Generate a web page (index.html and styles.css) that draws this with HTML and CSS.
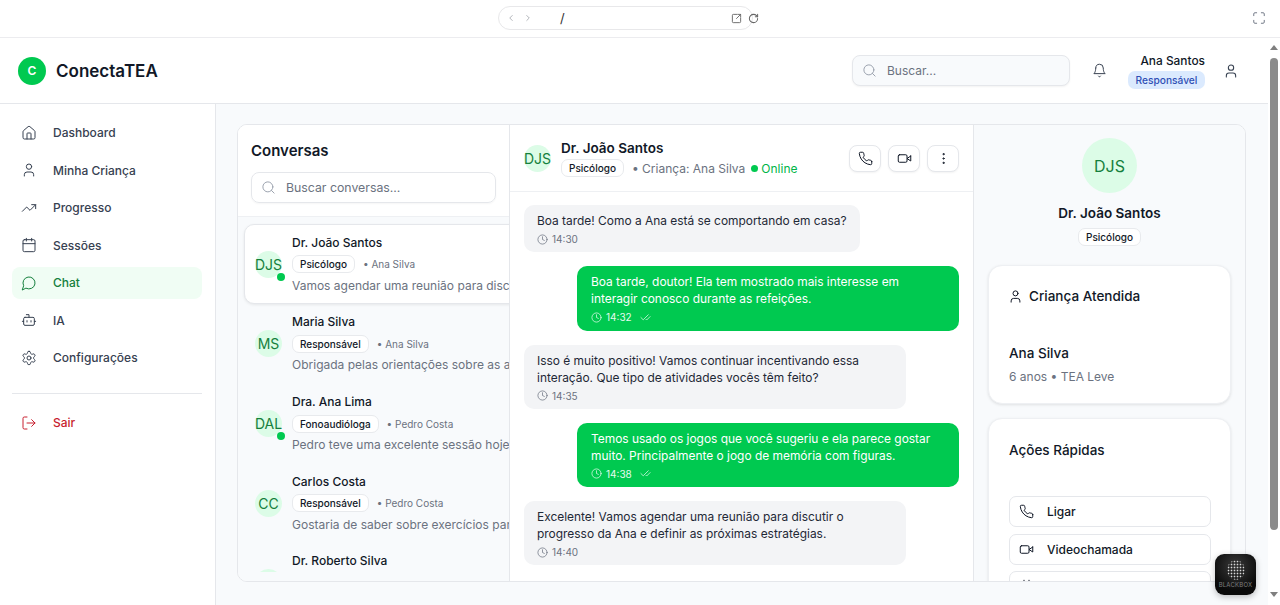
FILE: index.html
```html
<!DOCTYPE html>
<html lang="pt-BR">
<head>
  <meta charset="UTF-8" />
  <title>ConectaTEA</title>
  <link rel="stylesheet" href="styles.css">
</head>
<body>
  <svg class="defs" width="0" height="0">
    <symbol id="i-home" viewBox="0 0 24 24"><path d="M15 21v-8a1 1 0 0 0-1-1h-4a1 1 0 0 0-1 1v8"/><path d="M3 10a2 2 0 0 1 .709-1.528l7-5.999a2 2 0 0 1 2.582 0l7 5.999A2 2 0 0 1 21 10v9a2 2 0 0 1-2 2H5a2 2 0 0 1-2-2z"/></symbol>
    <symbol id="i-user" viewBox="0 0 24 24"><path d="M19 21v-2a4 4 0 0 0-4-4H9a4 4 0 0 0-4 4v2"/><circle cx="12" cy="7" r="4"/></symbol>
    <symbol id="i-trend" viewBox="0 0 24 24"><polyline points="22 7 13.5 15.5 8.5 10.5 2 17"/><polyline points="16 7 22 7 22 13"/></symbol>
    <symbol id="i-calendar" viewBox="0 0 24 24"><path d="M8 2v4"/><path d="M16 2v4"/><rect width="18" height="18" x="3" y="4" rx="2"/><path d="M3 10h18"/></symbol>
    <symbol id="i-message" viewBox="0 0 24 24"><path d="M7.9 20A9 9 0 1 0 4 16.1L2 22Z"/></symbol>
    <symbol id="i-bot" viewBox="0 0 24 24"><path d="M12 8V4H8"/><rect width="16" height="12" x="4" y="8" rx="2"/><path d="M2 14h2"/><path d="M20 14h2"/><path d="M15 13v2"/><path d="M9 13v2"/></symbol>
    <symbol id="i-settings" viewBox="0 0 24 24"><path d="M12.22 2h-.44a2 2 0 0 0-2 2v.18a2 2 0 0 1-1 1.73l-.43.25a2 2 0 0 1-2 0l-.15-.08a2 2 0 0 0-2.73.73l-.22.38a2 2 0 0 0 .73 2.73l.15.1a2 2 0 0 1 1 1.72v.51a2 2 0 0 1-1 1.74l-.15.09a2 2 0 0 0-.73 2.73l.22.38a2 2 0 0 0 2.73.73l.15-.08a2 2 0 0 1 2 0l.43.25a2 2 0 0 1 1 1.73V20a2 2 0 0 0 2 2h.44a2 2 0 0 0 2-2v-.18a2 2 0 0 1 1-1.73l.43-.25a2 2 0 0 1 2 0l.15.08a2 2 0 0 0 2.73-.73l.22-.39a2 2 0 0 0-.73-2.73l-.15-.08a2 2 0 0 1-1-1.74v-.5a2 2 0 0 1 1-1.74l.15-.09a2 2 0 0 0 .73-2.73l-.22-.38a2 2 0 0 0-2.73-.73l-.15.08a2 2 0 0 1-2 0l-.43-.25a2 2 0 0 1-1-1.73V4a2 2 0 0 0-2-2z"/><circle cx="12" cy="12" r="3"/></symbol>
    <symbol id="i-logout" viewBox="0 0 24 24"><path d="M9 21H5a2 2 0 0 1-2-2V5a2 2 0 0 1 2-2h4"/><polyline points="16 17 21 12 16 7"/><line x1="21" x2="9" y1="12" y2="12"/></symbol>
    <symbol id="i-search" viewBox="0 0 24 24"><circle cx="11" cy="11" r="8"/><path d="m21 21-4.3-4.3"/></symbol>
    <symbol id="i-bell" viewBox="0 0 24 24"><path d="M6 8a6 6 0 0 1 12 0c0 7 3 9 3 9H3s3-2 3-9"/><path d="M10.3 21a1.94 1.94 0 0 0 3.4 0"/></symbol>
    <symbol id="i-phone" viewBox="0 0 24 24"><path d="M22 16.92v3a2 2 0 0 1-2.18 2 19.79 19.79 0 0 1-8.63-3.07 19.5 19.5 0 0 1-6-6 19.79 19.79 0 0 1-3.07-8.67A2 2 0 0 1 4.11 2h3a2 2 0 0 1 2 1.72 12.84 12.84 0 0 0 .7 2.81 2 2 0 0 1-.45 2.11L8.09 9.91a16 16 0 0 0 6 6l1.27-1.27a2 2 0 0 1 2.11-.45 12.84 12.84 0 0 0 2.81.7A2 2 0 0 1 22 16.92z"/></symbol>
    <symbol id="i-video" viewBox="0 0 24 24"><path d="m22 8-6 4 6 4V8Z"/><rect width="14" height="12" x="2" y="6" rx="2" ry="2"/></symbol>
    <symbol id="i-more" viewBox="0 0 24 24"><circle cx="12" cy="12" r="1"/><circle cx="12" cy="5" r="1"/><circle cx="12" cy="19" r="1"/></symbol>
    <symbol id="i-clock" viewBox="0 0 24 24"><circle cx="12" cy="12" r="10"/><polyline points="12 6 12 12 16 14"/></symbol>
    <symbol id="i-checks" viewBox="0 0 24 24"><path d="M18 6 7 17l-5-5"/><path d="m22 10-7.5 7.5L13 16"/></symbol>
    <symbol id="i-full" viewBox="0 0 24 24"><path d="M8 3H5a2 2 0 0 0-2 2v3"/><path d="M21 8V5a2 2 0 0 0-2-2h-3"/><path d="M3 16v3a2 2 0 0 0 2 2h3"/><path d="M16 21h3a2 2 0 0 0 2-2v-3"/></symbol>
    <symbol id="i-open" viewBox="0 0 24 24"><path d="M13 3H5a2 2 0 0 0-2 2v14a2 2 0 0 0 2 2h14a2 2 0 0 0 2-2v-8"/><path d="M21 3l-9 9"/><path d="M15 3h6v6"/></symbol>
    <symbol id="i-reload" viewBox="0 0 24 24"><path d="M21 12a9 9 0 1 1-9-9c2.52 0 4.93 1 6.74 2.74L21 8"/><path d="M21 3v5h-5"/></symbol>
    <symbol id="i-left" viewBox="0 0 24 24"><path d="m15 18-6-6 6-6"/></symbol>
    <symbol id="i-right" viewBox="0 0 24 24"><path d="m9 18 6-6-6-6"/></symbol>
  </svg>

  <div class="toolbar">
    <div class="address">
      <svg class="icon tool-arrow"><use href="#i-left"/></svg>
      <svg class="icon tool-arrow"><use href="#i-right"/></svg>
      <span class="address-path">/</span>
      <svg class="icon tool-open"><use href="#i-open"/></svg>
      <svg class="icon tool-reload"><use href="#i-reload"/></svg>
    </div>
    <svg class="icon tool-full"><use href="#i-full"/></svg>
  </div>

  <div class="window">
    <div class="page">
      <header class="header">
        <div class="brand">
          <div class="brand-mark">C</div>
          <div class="brand-name">ConectaTEA</div>
        </div>
        <div class="header-right">
          <div class="header-search">
            <svg class="icon search-icon"><use href="#i-search"/></svg>
            <span>Buscar...</span>
          </div>
          <svg class="icon bell"><use href="#i-bell"/></svg>
          <div class="me">
            <div class="me-name">Ana Santos</div>
            <div class="me-role">Responsável</div>
          </div>
          <svg class="icon me-icon"><use href="#i-user"/></svg>
        </div>
      </header>

      <div class="body">
        <nav class="sidebar">
          <a class="nav-item"><svg class="icon"><use href="#i-home"/></svg>Dashboard</a>
          <a class="nav-item"><svg class="icon"><use href="#i-user"/></svg>Minha Criança</a>
          <a class="nav-item"><svg class="icon"><use href="#i-trend"/></svg>Progresso</a>
          <a class="nav-item"><svg class="icon"><use href="#i-calendar"/></svg>Sessões</a>
          <a class="nav-item active"><svg class="icon"><use href="#i-message"/></svg>Chat</a>
          <a class="nav-item"><svg class="icon"><use href="#i-bot"/></svg>IA</a>
          <a class="nav-item"><svg class="icon"><use href="#i-settings"/></svg>Configurações</a>
          <div class="nav-divider"></div>
          <a class="nav-item logout"><svg class="icon"><use href="#i-logout"/></svg>Sair</a>
        </nav>

        <main class="main">
          <div class="chat-card">
            <section class="conversations">
              <div class="conv-head">
                <h2>Conversas</h2>
                <div class="conv-search">
                  <svg class="icon search-icon"><use href="#i-search"/></svg>
                  <span>Buscar conversas...</span>
                </div>
              </div>
              <div class="conv-list">
                <div class="conv selected">
                  <div class="avatar">DJS<span class="dot"></span></div>
                  <div class="conv-text">
                    <div class="conv-name">Dr. João Santos</div>
                    <div class="conv-meta"><span class="tag">Psicólogo</span><span>• Ana Silva</span></div>
                    <div class="conv-preview">Vamos agendar uma reunião para discutir</div>
                  </div>
                </div>
                <div class="conv">
                  <div class="avatar">MS</div>
                  <div class="conv-text">
                    <div class="conv-name">Maria Silva</div>
                    <div class="conv-meta"><span class="tag">Responsável</span><span>• Ana Silva</span></div>
                    <div class="conv-preview">Obrigada pelas orientações sobre as atividades</div>
                  </div>
                </div>
                <div class="conv">
                  <div class="avatar">DAL<span class="dot"></span></div>
                  <div class="conv-text">
                    <div class="conv-name">Dra. Ana Lima</div>
                    <div class="conv-meta"><span class="tag">Fonoaudióloga</span><span>• Pedro Costa</span></div>
                    <div class="conv-preview">Pedro teve uma excelente sessão hoje</div>
                  </div>
                </div>
                <div class="conv">
                  <div class="avatar">CC</div>
                  <div class="conv-text">
                    <div class="conv-name">Carlos Costa</div>
                    <div class="conv-meta"><span class="tag">Responsável</span><span>• Pedro Costa</span></div>
                    <div class="conv-preview">Gostaria de saber sobre exercícios para casa</div>
                  </div>
                </div>
                <div class="conv">
                  <div class="avatar">DRS</div>
                  <div class="conv-text">
                    <div class="conv-name">Dr. Roberto Silva</div>
                    <div class="conv-meta"><span class="tag">Neurologista</span><span>• Lucas Lima</span></div>
                    <div class="conv-preview">Os resultados da avaliação estão prontos</div>
                  </div>
                </div>
              </div>
            </section>

            <section class="thread">
              <div class="thread-head">
                <div class="avatar">DJS</div>
                <div class="thread-info">
                  <div class="thread-name">Dr. João Santos</div>
                  <div class="thread-meta">
                    <span class="tag">Psicólogo</span>
                    <span>• Criança: Ana Silva</span>
                    <span class="online"><i></i>Online</span>
                  </div>
                </div>
                <div class="thread-actions">
                  <button class="square-btn"><svg class="icon"><use href="#i-phone"/></svg></button>
                  <button class="square-btn"><svg class="icon"><use href="#i-video"/></svg></button>
                  <button class="square-btn"><svg class="icon"><use href="#i-more"/></svg></button>
                </div>
              </div>
              <div class="messages">
                <div class="msg">
                  <p>Boa tarde! Como a Ana está se comportando em casa?</p>
                  <div class="msg-time"><svg class="icon"><use href="#i-clock"/></svg>14:30</div>
                </div>
                <div class="msg mine">
                  <p>Boa tarde, doutor! Ela tem mostrado mais interesse em interagir conosco durante as refeições.</p>
                  <div class="msg-time"><svg class="icon"><use href="#i-clock"/></svg>14:32<svg class="icon checks"><use href="#i-checks"/></svg></div>
                </div>
                <div class="msg">
                  <p>Isso é muito positivo! Vamos continuar incentivando essa interação. Que tipo de atividades vocês têm feito?</p>
                  <div class="msg-time"><svg class="icon"><use href="#i-clock"/></svg>14:35</div>
                </div>
                <div class="msg mine">
                  <p>Temos usado os jogos que você sugeriu e ela parece gostar muito. Principalmente o jogo de memória com figuras.</p>
                  <div class="msg-time"><svg class="icon"><use href="#i-clock"/></svg>14:38<svg class="icon checks"><use href="#i-checks"/></svg></div>
                </div>
                <div class="msg">
                  <p>Excelente! Vamos agendar uma reunião para discutir o progresso da Ana e definir as próximas estratégias.</p>
                  <div class="msg-time"><svg class="icon"><use href="#i-clock"/></svg>14:40</div>
                </div>
              </div>
            </section>

            <aside class="details">
              <div class="profile">
                <div class="avatar big">DJS</div>
                <div class="profile-name">Dr. João Santos</div>
                <span class="tag">Psicólogo</span>
              </div>
              <div class="panel child-panel">
                <h3><svg class="icon"><use href="#i-user"/></svg>Criança Atendida</h3>
                <div class="child-name">Ana Silva</div>
                <div class="child-info">6 anos • TEA Leve</div>
              </div>
              <div class="panel actions-panel">
                <h3>Ações Rápidas</h3>
                <button class="wide-btn"><svg class="icon"><use href="#i-phone"/></svg>Ligar</button>
                <button class="wide-btn"><svg class="icon"><use href="#i-video"/></svg>Videochamada</button>
                <button class="wide-btn"><svg class="icon"><use href="#i-calendar"/></svg>Agendar Sessão</button>
              </div>
            </aside>
          </div>
        </main>
      </div>
    </div>

    <div class="scrollbar">
      <span class="arrow-up"></span>
      <span class="thumb"></span>
      <span class="arrow-down"></span>
    </div>
  </div>

  <div class="blackbox">
    <div class="blackbox-dots"></div>
    <div class="blackbox-label">BLACKBOX</div>
  </div>
</body>
</html>
```

FILE: styles.css
```css
* {
  box-sizing: border-box;
}

body {
  margin: 0;
  height: 100vh;
  overflow: hidden;
  display: flex;
  flex-direction: column;
  font-family: "Inter", "Liberation Sans", sans-serif;
  color: #111827;
  background: #fff;
}

.defs {
  position: absolute;
}

.icon {
  width: 16px;
  height: 16px;
  fill: none;
  stroke: currentColor;
  stroke-width: 1.6;
  stroke-linecap: round;
  stroke-linejoin: round;
  flex-shrink: 0;
}

/* browser strip */
.toolbar {
  height: 38px;
  flex-shrink: 0;
  display: flex;
  align-items: flex-start;
  padding: 6px 0 0 498px;
  border-bottom: 1px solid #ececef;
  background: #fff;
}

.address {
  width: 255px;
  height: 24px;
  display: flex;
  align-items: center;
  padding-left: 7px;
  border: 1px solid #e8e8ea;
  border-radius: 12px;
  color: #8d9199;
}

.tool-arrow {
  width: 10px;
  height: 10px;
  margin-right: 7px;
}

.address-path {
  margin-left: 20px;
  font-size: 13px;
  color: #333;
}

.tool-open {
  width: 11px;
  height: 11px;
  margin-left: auto;
  color: #666;
  stroke-width: 2;
}

.tool-reload {
  width: 11px;
  height: 11px;
  margin-left: 6px;
  margin-right: -7px;
  color: #666;
  stroke-width: 2.2;
}

.tool-full {
  width: 14px;
  height: 14px;
  margin: 5px 0 0 499px;
  color: #6b7280;
}

.window {
  flex: 1;
  min-height: 0;
  display: flex;
}

.page {
  flex: 1;
  min-width: 0;
  display: flex;
  flex-direction: column;
}

.scrollbar {
  width: 12px;
  flex-shrink: 0;
  display: flex;
  flex-direction: column;
  align-items: center;
  padding-top: 7px;
  background: #fff;
}

.arrow-up {
  border: 4px solid transparent;
  border-top: 0;
  border-bottom: 5px solid #7f7f7f;
}

.thumb {
  width: 8px;
  height: 472px;
  margin-top: 8px;
  border-radius: 4px;
  background: #8b8b8b;
}

.arrow-down {
  margin-top: 62px;
  border: 4px solid transparent;
  border-bottom: 0;
  border-top: 5px solid #7f7f7f;
}

/* header */
.header {
  height: 66px;
  flex-shrink: 0;
  display: flex;
  align-items: center;
  justify-content: space-between;
  padding: 0 29px 0 18px;
  border-bottom: 1px solid #e5e7eb;
  background: #fff;
}

.brand {
  display: flex;
  align-items: center;
  gap: 10px;
}

.brand-mark {
  width: 28px;
  height: 28px;
  display: flex;
  align-items: center;
  justify-content: center;
  border-radius: 50%;
  background: #00c950;
  color: #fff;
  font-size: 12px;
  font-weight: 600;
}

.brand-name {
  font-size: 17px;
  font-weight: 600;
}

.header-right {
  display: flex;
  align-items: center;
}

.header-search {
  width: 218px;
  height: 31px;
  display: flex;
  align-items: center;
  gap: 10px;
  padding-left: 9px;
  border: 1px solid #e5e7eb;
  border-radius: 8px;
  background: #f8fafc;
  box-shadow: 0 1px 2px rgba(0, 0, 0, 0.05);
  color: #6b7280;
  font-size: 12px;
}

.search-icon {
  width: 15px;
  height: 15px;
  color: #9ca3af;
}

.bell {
  width: 15px;
  height: 15px;
  margin-left: 21.5px;
  color: #374151;
}

.me {
  width: 77px;
  margin-left: 21.5px;
  display: flex;
  flex-direction: column;
  align-items: flex-end;
}

.me-name {
  font-size: 11.9px;
  font-weight: 500;
  line-height: 15px;
}

.me-role {
  width: 77px;
  margin-top: 3px;
  height: 18px;
  line-height: 18px;
  text-align: center;
  border-radius: 7px;
  background: #dbeafe;
  color: #2f4fb5;
  font-size: 10.2px;
  font-weight: 500;
}

.me-icon {
  margin-left: 18px;
  color: #374151;
}

.body {
  flex: 1;
  min-height: 0;
  display: flex;
}

/* sidebar */
.sidebar {
  width: 216px;
  flex-shrink: 0;
  padding: 13px 13px 0 12px;
  border-right: 1px solid #e5e7eb;
  background: #fff;
}

.nav-item {
  height: 31.5px;
  margin-bottom: 6px;
  display: flex;
  align-items: center;
  gap: 16.5px;
  padding-left: 8.5px;
  border-radius: 8px;
  color: #374151;
  font-size: 12px;
  font-weight: 500;
}

.nav-item .icon {
  stroke-width: 1.5;
}

.nav-item.active {
  background: #f0fdf4;
  color: #15803d;
}

.nav-item.logout {
  color: #c81e2e;
}

.nav-divider {
  height: 1px;
  margin: 19.5px 0 13px;
  background: #e5e7eb;
}

/* main */
.main {
  flex: 1;
  min-width: 0;
  padding: 20px 22px 0 21px;
  background: #f8fafc;
  height: 100%;
}

.chat-card {
  height: 458px;
  display: flex;
  overflow: hidden;
  border: 1px solid #e5e7eb;
  border-radius: 10px;
  background: #fff;
}

.conversations {
  width: 272px;
  flex-shrink: 0;
  display: flex;
  flex-direction: column;
  overflow: hidden;
  border-right: 1px solid #e5e7eb;
  background: #f8fafc;
}

.conv-head {
  height: 92px;
  flex-shrink: 0;
  padding: 16px 13px 0;
  border-bottom: 1px solid #eef0f3;
  background: #fff;
}

.conv-head h2 {
  margin: 0 0 11px;
  font-size: 15px;
  font-weight: 600;
  line-height: 20px;
}

.conv-search {
  height: 31px;
  display: flex;
  align-items: center;
  gap: 10px;
  padding-left: 9px;
  border: 1px solid #e5e7eb;
  border-radius: 8px;
  box-shadow: 0 1px 2px rgba(0, 0, 0, 0.04);
  color: #6b7280;
  font-size: 12.3px;
}

.conv-list {
  flex: 1;
  min-height: 0;
  overflow: hidden;
  margin-bottom: 9px;
  padding: 7px 0 0 6px;
}

.conv {
  width: 300px;
  height: 79.7px;
  display: flex;
  align-items: center;
  gap: 10px;
  padding-left: 11px;
}

.conv.selected {
  height: 80px;
  background: #fff;
  border: 1px solid #e5e7eb;
  border-radius: 10px;
  padding-left: 10px;
  box-shadow: 0 1px 3px rgba(0, 0, 0, 0.08);
}

.avatar {
  position: relative;
  width: 27px;
  height: 27px;
  flex-shrink: 0;
  display: flex;
  align-items: center;
  justify-content: center;
  border-radius: 50%;
  background: #dcfce7;
  color: #15803d;
  font-size: 14px;
}

.avatar.big {
  width: 55px;
  height: 55px;
  font-size: 16px;
}

.dot {
  position: absolute;
  right: -3px;
  bottom: -3px;
  width: 8px;
  height: 8px;
  border-radius: 50%;
  background: #00c950;
}

.conv-text {
  min-width: 0;
  flex: 1;
}

.conv-name {
  font-size: 12px;
  font-weight: 500;
  line-height: 16px;
  white-space: nowrap;
}

.conv-meta {
  margin-top: 4.5px;
  display: flex;
  align-items: center;
  gap: 8px;
  color: #6b7280;
  font-size: 10px;
  white-space: nowrap;
}

.tag {
  display: inline-block;
  height: 18px;
  padding: 0 7px;
  line-height: 16px;
  border: 1px solid #e8eaed;
  border-radius: 7px;
  background: #fff;
  color: #111827;
  font-size: 10px;
  font-weight: 500;
}

.conv-preview {
  margin-top: 4.5px;
  color: #6b7280;
  font-size: 12px;
  line-height: 16px;
  white-space: nowrap;
}

/* thread */
.thread {
  width: 464px;
  flex-shrink: 0;
  display: flex;
  flex-direction: column;
  border-right: 1px solid #e5e7eb;
}

.thread-head {
  height: 67px;
  flex-shrink: 0;
  display: flex;
  align-items: center;
  gap: 10px;
  padding: 0 14px;
  border-bottom: 1px solid #eef0f3;
}

.thread-name {
  font-size: 13.5px;
  font-weight: 600;
  line-height: 18px;
}

.thread-meta {
  margin-top: 2px;
  display: flex;
  align-items: center;
  gap: 8px;
  color: #6b7280;
  font-size: 12px;
}

.online {
  display: flex;
  align-items: center;
  gap: 3px;
  margin-left: -2px;
  color: #00b548;
}

.online i {
  width: 7px;
  height: 7px;
  border-radius: 50%;
  background: #00c950;
}

.thread-actions {
  margin-left: auto;
  display: flex;
  gap: 7px;
}

.square-btn {
  width: 32px;
  height: 27px;
  display: flex;
  align-items: center;
  justify-content: center;
  padding: 0;
  border: 1px solid #e5e7eb;
  border-radius: 8px;
  background: #fff;
  color: #111827;
  box-shadow: 0 1px 2px rgba(0, 0, 0, 0.05);
}

.square-btn .icon {
  width: 15px;
  height: 15px;
}

.messages {
  flex: 1;
  min-height: 0;
  overflow: hidden;
  display: flex;
  flex-direction: column;
  gap: 14px;
  padding: 13px 14px 0;
}

.msg {
  width: fit-content;
  max-width: 382px;
  padding: 7px 13px 6.25px;
  border-radius: 10px;
  background: #f3f4f6;
  color: #1f2937;
}

.msg.mine {
  align-self: flex-end;
  padding-left: 14px;
  background: #00c950;
  color: #fff;
}

.msg p {
  margin: 0;
  font-size: 11.93px;
  line-height: 17px;
}

.msg-time {
  margin-top: 3px;
  display: flex;
  align-items: center;
  gap: 4px;
  font-size: 10px;
  line-height: 14px;
  color: #6b7280;
}

.msg.mine .msg-time {
  color: #e6fbef;
}

.msg-time .icon {
  width: 11px;
  height: 11px;
}

.msg-time .checks {
  margin-left: 4px;
}

/* right column */
.details {
  flex: 1;
  min-width: 0;
  overflow: hidden;
  padding: 13px 14px 0;
  background: #f8fafc;
}

.profile {
  display: flex;
  flex-direction: column;
  align-items: center;
}

.profile-name {
  margin-top: 11px;
  font-size: 13.5px;
  font-weight: 600;
  line-height: 18px;
}

.profile .tag {
  margin-top: 6px;
}

.panel {
  margin-top: 14px;
  padding: 21px 19.5px 21px 20px;
  border: 1px solid #eef0f3;
  border-radius: 14px;
  background: #fff;
  box-shadow: 0 1px 3px rgba(0, 0, 0, 0.1);
}

.profile + .panel {
  margin-top: 19px;
}

.panel h3 {
  margin: 0;
  display: flex;
  align-items: center;
  gap: 6px;
  font-size: 13.5px;
  font-weight: 500;
  line-height: 18px;
}

.panel h3 .icon {
  width: 15px;
  height: 15px;
  margin-left: -1px;
}

.child-panel {
  height: 139px;
}

.child-name {
  margin-top: 39px;
  font-size: 13.5px;
  font-weight: 500;
  line-height: 18px;
}

.child-info {
  margin-top: 7px;
  color: #6b7280;
  font-size: 12px;
  line-height: 16px;
}

.actions-panel {
  padding-top: 22px;
}

.actions-panel h3 {
  margin-bottom: 37px;
}

.wide-btn {
  width: 100%;
  height: 31px;
  margin-bottom: 6.5px;
  display: flex;
  align-items: center;
  gap: 13px;
  padding: 0 0 0 9px;
  border: 1px solid #e5e7eb;
  border-radius: 7px;
  background: #fff;
  color: #111827;
  font-family: inherit;
  font-size: 12px;
  font-weight: 500;
}

.wide-btn .icon {
  width: 15px;
  height: 15px;
}

/* floating badge */
.blackbox {
  position: absolute;
  left: 1215px;
  top: 554px;
  width: 41px;
  height: 41px;
  display: flex;
  flex-direction: column;
  align-items: center;
  border-radius: 9px;
  background: radial-gradient(circle at 50% 30%, #3a3a3a, #0a0a0a 70%);
  box-shadow: 0 2px 6px rgba(0, 0, 0, 0.25);
}

.blackbox-dots {
  width: 18px;
  height: 20px;
  margin-top: 6px;
  border-radius: 50%;
  background: radial-gradient(circle, #d9d9d9 0.7px, transparent 1.1px) 0 0 / 3px 3px;
}

.blackbox-label {
  margin-top: 1px;
  color: #7d7d7d;
  font-size: 6px;
  letter-spacing: 0.2px;
}
```
